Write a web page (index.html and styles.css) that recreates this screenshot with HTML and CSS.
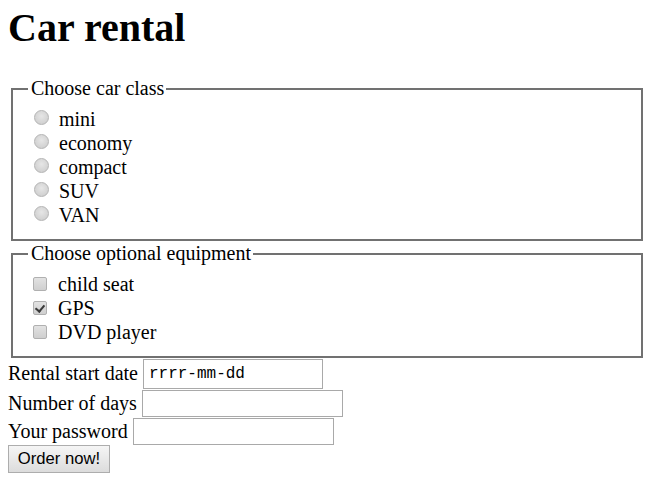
FILE: index.html
```html
<!DOCTYPE html>
<html lang="en">
<head>
<meta charset="utf-8">
<title>Car rental</title>
<link rel="stylesheet" href="styles.css">
</head>
<body>
<h1 class="title">Car rental</h1>
<form class="rental-form">
  <fieldset class="group">
    <legend class="group-legend">Choose car class</legend>
    <label class="option"><input class="radio" type="radio" name="class" value="mini"> mini</label>
    <label class="option"><input class="radio" type="radio" name="class" value="economy"> economy</label>
    <label class="option"><input class="radio" type="radio" name="class" value="compact"> compact</label>
    <label class="option"><input class="radio" type="radio" name="class" value="suv"> SUV</label>
    <label class="option"><input class="radio" type="radio" name="class" value="van"> VAN</label>
  </fieldset>
  <fieldset class="group group-equipment">
    <legend class="group-legend">Choose optional equipment</legend>
    <label class="option"><input class="check" type="checkbox" name="eq" value="seat"> child seat</label>
    <label class="option"><input class="check" type="checkbox" name="eq" value="gps" checked> GPS</label>
    <label class="option"><input class="check" type="checkbox" name="eq" value="dvd"> DVD player</label>
  </fieldset>
  <div class="row row-date">
    <label class="row-label" for="start">Rental start date</label>
    <input class="field field-date" id="start" type="text" value="rrrr-mm-dd">
  </div>
  <div class="row">
    <label class="row-label" for="days">Number of days</label>
    <input class="field" id="days" type="text">
  </div>
  <div class="row">
    <label class="row-label" for="pw">Your password</label>
    <input class="field" id="pw" type="password">
  </div>
  <button class="order-btn" type="submit">Order now!</button>
</form>
</body>
</html>
```

FILE: styles.css
```css
html, body {
  background: #ffffff;
}
body {
  margin: 0 8px;
  font-family: "Liberation Serif", "Times New Roman", serif;
  font-size: 20px;
  color: #000000;
}
.title {
  font-size: 40px;
  font-weight: bold;
  margin: 4px 0 26px;
  line-height: normal;
}
.rental-form {
  margin: 0;
}
.group {
  margin: 0 0 0 3px;
  border: 2px solid #717171;
  padding: 7px 15px 12px;
  min-width: 0;
}
.group-equipment {
  margin-top: 1px;
}
.group-legend {
  padding: 0 2px 0 3px;
  line-height: normal;
}
.option {
  display: block;
  line-height: normal;
}
.radio {
  appearance: none;
  -webkit-appearance: none;
  width: 15px;
  height: 15px;
  margin: 3px 5px 1px 6px;
  border: 1px solid #b4b4b4;
  border-radius: 50%;
  background: radial-gradient(circle at 50% 40%, #e6e6e6 0%, #d2d2d2 70%, #c8c8c8 100%);
  box-sizing: border-box;
}
.check {
  appearance: none;
  -webkit-appearance: none;
  position: relative;
  width: 14px;
  height: 14px;
  margin: 5px 6px 0 5px;
  border: 1px solid #b0b0b0;
  border-radius: 2px;
  background: linear-gradient(#e2e2e2, #cfcfcf);
  box-sizing: border-box;
}
.check:checked::after {
  content: "";
  position: absolute;
  left: 3px;
  top: 1px;
  width: 4px;
  height: 7px;
  border: solid #3a3a3a;
  border-width: 0 2px 2px 0;
  transform: rotate(40deg);
}
.row {
  display: flex;
  align-items: center;
  gap: 5px;
  height: 28px;
}
.row-date {
  height: 31px;
}
.row-label {
  line-height: normal;
}
.field {
  width: 201px;
  height: 27px;
  margin: 0;
  padding: 1px 4px;
  border: 1px solid #a9a9a9;
  box-sizing: border-box;
  font-family: "Liberation Mono", "DejaVu Sans Mono", monospace;
  font-size: 16px;
  background: #ffffff;
  color: #000000;
  outline: none;
}
.field-date {
  width: 180px;
  height: 30px;
  margin-top: 1px;
  padding-left: 5px;
}
.order-btn {
  display: block;
  margin-top: 0;
  width: 102px;
  height: 28px;
  padding: 0;
  border: 1px solid #adadad;
  border-radius: 0;
  background: linear-gradient(#f5f5f5, #dcdcdc);
  font-family: "Liberation Sans", Arial, sans-serif;
  font-size: 16.67px;
  color: #000000;
}
```
